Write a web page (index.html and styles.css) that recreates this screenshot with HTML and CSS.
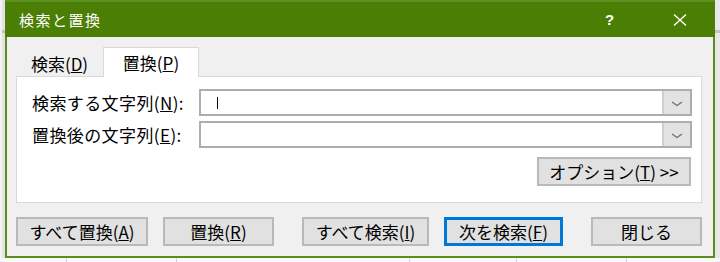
FILE: index.html
```html
<!DOCTYPE html>
<html>
<head>
    <title>検索と置換</title>
    <link rel="stylesheet" href="styles.css">
</head>
<body>

<div class="screen">
    <div class="edge-left"><div class="thumb"></div></div>
    <div class="dialog">
        <div class="titlebar">
            <span class="title">検索と置換</span>
            <span class="help">?</span>
            <span class="close">
                <svg width="16" height="12" viewBox="0 0 16 12">
                    <path d="M2 0.5 L14 11.5 M14 0.5 L2 11.5" stroke="#fff" stroke-width="1.4" fill="none"/>
                </svg>
            </span>
        </div>
        <div class="body">
            <div class="tabs">
                <div class="tab">検索(<u>D</u>)</div>
                <div class="tab active">置換(<u>P</u>)</div>
            </div>
            <div class="panel">
                <div class="row">
                    <label>検索する文字列(<u>N</u>):</label>
                    <div class="combo">
                        <div class="field"><span class="caret"></span></div>
                        <div class="drop">
                            <svg width="12" height="6" viewBox="0 0 12 6">
                                <path d="M1 1 L6 4.5 L11 1" stroke="#707070" stroke-width="1.3" fill="none"/>
                            </svg>
                        </div>
                    </div>
                </div>
                <div class="row">
                    <label>置換後の文字列(<u>E</u>):</label>
                    <div class="combo">
                        <div class="field"></div>
                        <div class="drop">
                            <svg width="12" height="6" viewBox="0 0 12 6">
                                <path d="M1 1 L6 4.5 L11 1" stroke="#707070" stroke-width="1.3" fill="none"/>
                            </svg>
                        </div>
                    </div>
                </div>
                <div class="options-row">
                    <button class="btn options">オプション(<u>T</u>) &gt;&gt;</button>
                </div>
            </div>
            <div class="actions">
                <button class="btn w132">すべて置換(<u>A</u>)</button>
                <button class="btn w111 gap-s">置換(<u>R</u>)</button>
                <button class="btn w127 gap-l">すべて検索(<u>I</u>)</button>
                <button class="btn w119 gap-s focused">次を検索(<u>F</u>)</button>
                <button class="btn w111 gap-l">閉じる</button>
            </div>
        </div>
    </div>
    <div class="edge-right"><div class="thumb"></div></div>
</div>
<div class="sheet">
    <div class="cell c67"></div>
    <div class="cell c110"></div>
    <div class="cell c233"></div>
    <div class="cell c107"></div>
    <div class="cell c110"></div>
    <div class="cell"></div>
</div>

</body>
</html>
```

FILE: styles.css
```css
body {
    margin: 0;
    width: 720px;
    height: 262px;
    overflow: hidden;
    background-color: #f7f7f7;
    font-family: "Noto Sans CJK JP", sans-serif;
    color: #000;
}
.screen {
    display: flex;
    height: 258px;
}
.edge-left {
    width: 3px;
    border-left: 2px solid #f2f2f2;
    background-color: #e3e3e3;
}
.edge-right {
    width: 5px;
    background-color: #e8e8e8;
}
.thumb {
    margin-top: 30px;
    height: 3px;
    background-color: #c2c2c2;
}
.dialog {
    width: 706px;
    display: flex;
    flex-direction: column;
    border: 2px solid #5a8c1f;
    border-top: none;
    background-color: #f0f0f0;
}
.titlebar {
    height: 35px;
    display: flex;
    align-items: center;
    background-color: #4b7e04;
    border-top: 2px solid #5d9022;
    margin: 0 -2px 0 -2px;
    padding: 0 2px;
    color: #fff;
}
.title {
    padding-left: 12px;
    font-size: 15px;
    letter-spacing: 1.5px;
}
.help {
    margin-left: auto;
    width: 8px;
    font-size: 15px;
    font-weight: bold;
    font-family: "Liberation Sans", sans-serif;
}
.close {
    display: flex;
    margin-left: 59px;
    margin-right: 25px;
}
.body {
    flex: 1;
    padding: 10px 9px 10px 9px;
    display: flex;
    flex-direction: column;
}
.tabs {
    display: flex;
    height: 29px;
}
.tab {
    width: 87px;
    height: 29px;
    box-sizing: border-box;
    display: flex;
    align-items: center;
    justify-content: center;
    font-size: 17px;
    padding-top: 4px;
}
.tab.active {
    position: relative;
    z-index: 1;
    width: 96px;
    height: 30px;
    padding-top: 0;
    background-color: #fff;
    border: 1px solid #d9d9d9;
    border-bottom: none;
}
.panel {
    height: 127px;
    box-sizing: border-box;
    margin-right: 2px;
    padding: 12px 9px 0 15px;
    background-color: #fff;
    border: 1px solid #d9d9d9;
}
.row {
    display: flex;
    align-items: center;
    height: 27px;
    margin-bottom: 5px;
}
.row label {
    width: 167px;
    font-size: 17px;
    letter-spacing: 0.4px;
}
.combo {
    flex: 1;
    height: 27px;
    box-sizing: border-box;
    display: flex;
    border: 2px solid #adadad;
    background-color: #fff;
}
.field {
    flex: 1;
    display: flex;
    align-items: center;
    padding-left: 16px;
}
.caret {
    width: 1px;
    height: 12px;
    background-color: #000;
}
.drop {
    width: 26px;
    display: flex;
    align-items: center;
    justify-content: center;
    background-color: #e3e3e3;
    border-left: 2px solid #cfcfcf;
    padding-top: 2px;
}
.options-row {
    display: flex;
    justify-content: flex-end;
    margin-top: 9px;
    margin-right: 1px;
}
.btn {
    height: 29px;
    padding: 0;
    box-sizing: border-box;
    background-color: #e1e1e1;
    border: 2px solid #b9b9b9;
    font-family: "Noto Sans CJK JP", sans-serif;
    font-size: 17px;
    color: #000;
    display: flex;
    align-items: center;
    justify-content: center;
}
.options {
    width: 154px;
}
.btn.focused {
    border: 3px solid #0078d7;
}
.actions {
    display: flex;
    margin-top: 14px;
}
.w132 { width: 132px; }
.w111 { width: 111px; }
.w127 { width: 127px; }
.w119 { width: 119px; }
.gap-s { margin-left: 15px; }
.gap-l { margin-left: 28px; }
.sheet {
    display: flex;
    height: 4px;
    background-color: #f9f9f9;
}
.cell {
    flex: none;
    box-sizing: border-box;
    border-right: 1px solid #d4d4d4;
}
.cell:last-child {
    flex: 1;
    border-right: none;
}
.c67 { width: 67px; }
.c110 { width: 110px; }
.c233 { width: 233px; }
.c107 { width: 107px; }
```
